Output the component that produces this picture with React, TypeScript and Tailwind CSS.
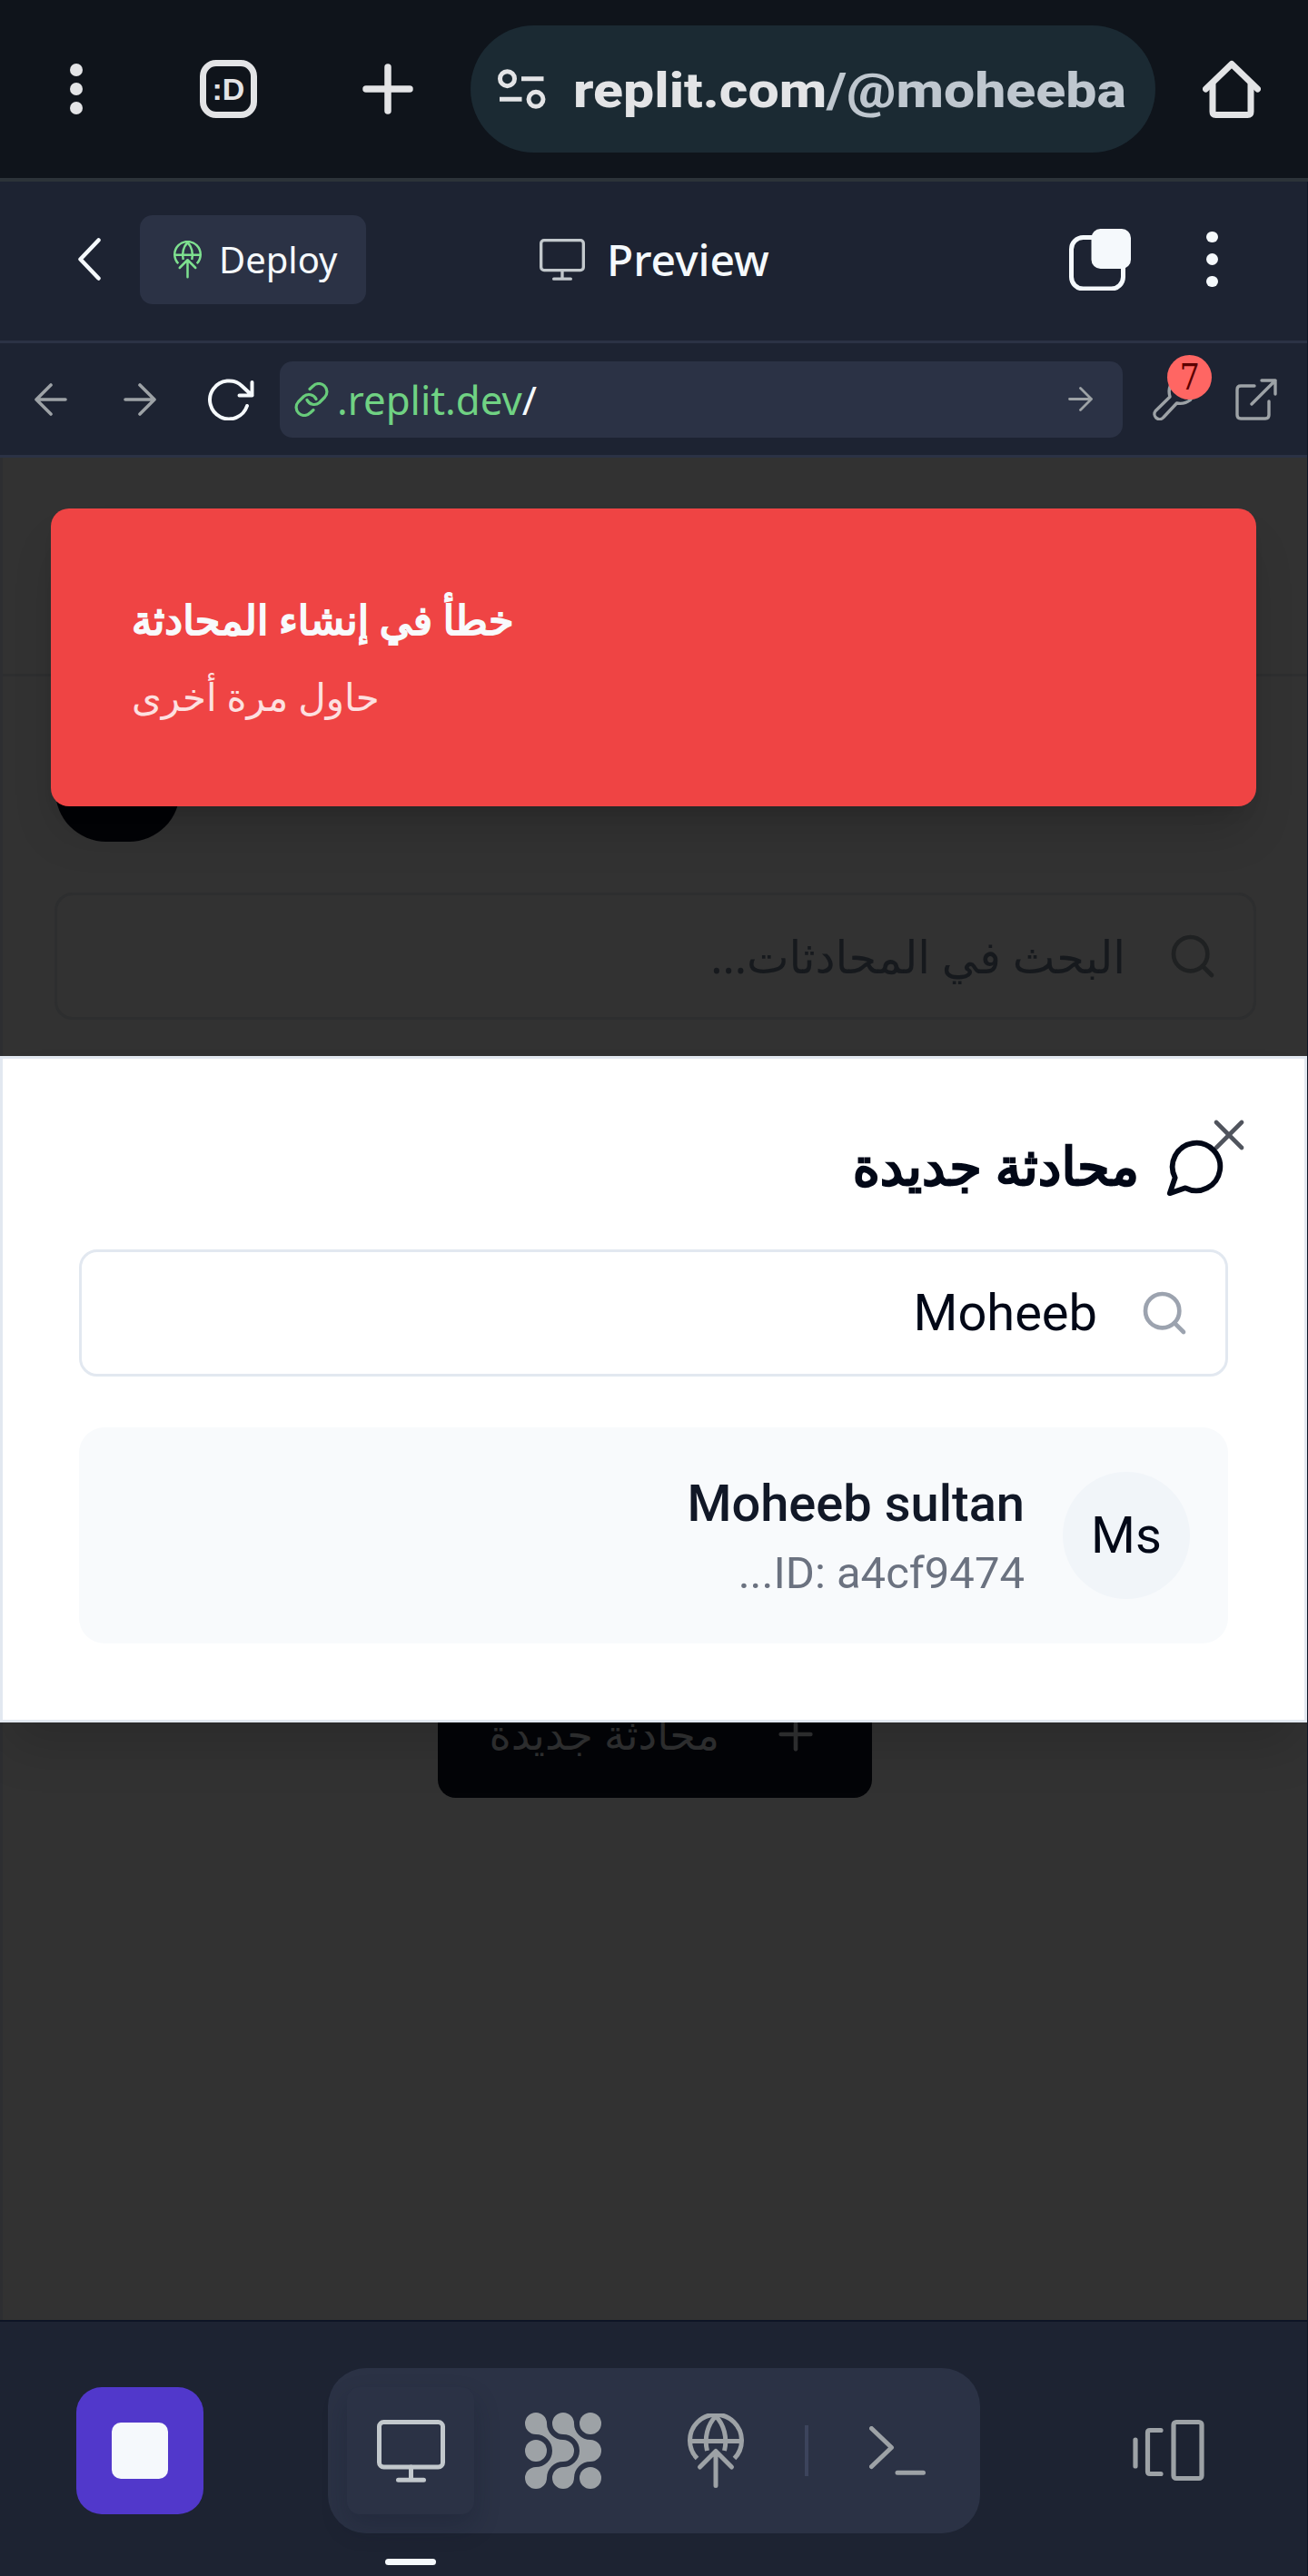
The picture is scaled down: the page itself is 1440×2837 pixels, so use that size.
import React from "react";
import { Plus, Search, X } from "lucide-react";

type IconProps = { className?: string };

const stroke = {
  fill: "none",
  stroke: "currentColor",
  strokeLinecap: "round" as const,
  strokeLinejoin: "round" as const,
};

const MonitorIcon = ({ className }: IconProps) => (
  <svg viewBox="0 0 75 69" className={className} {...stroke} strokeWidth={5}>
    <rect x="2.5" y="2.5" width="70" height="49.5" rx="5" />
    <path d="M37.5 52v14M23.5 66.2h28" />
  </svg>
);

const DeployIcon = ({ className }: IconProps) => (
  <svg viewBox="0 0 62 82" className={className} {...stroke} strokeWidth={5}>
    <path d="M10.500 49.500A28.500 28.500 0 1 1 51.500 49.500M3 30.500h56" strokeLinecap="butt" />
    <path d="M31 3C22 12 18 27 21.500 41M31 3C40 12 44 27 40.500 41" strokeLinecap="butt" />
    <path d="M31 79.500V41.500M13.500 59L31 41.500L48.500 59" />
  </svg>
);

const AgentIcon = ({ className }: IconProps) => {
  const link =
    "M24 12A18 18 0 0 0 42 30A12 12 0 0 1 42 54A18 18 0 0 0 24 72A12 12 0 1 1 12 60A18 18 0 0 0 30 42A18 18 0 0 0 12 24A12 12 0 1 1 24 12Z";
  return (
    <svg viewBox="0 0 84 84" className={className} fill="currentColor">
      <path d={link} />
      <path d={link} transform="translate(30 0)" />
      <circle cx="12" cy="42" r="12" />
      <circle cx="72" cy="12" r="12" />
      <circle cx="72" cy="72" r="12" />
    </svg>
  );
};

const Dots = ({ className }: IconProps) => (
  <div className={className}>
    <i className="block aspect-square w-full rounded-full bg-current" />
    <i className="block aspect-square w-full rounded-full bg-current" />
    <i className="block aspect-square w-full rounded-full bg-current" />
  </div>
);

function BrowserBar() {
  return (
    <header className="flex h-[200px] shrink-0 items-center border-b-4 border-[#2c3339] bg-[#0f141b] text-[#e3e4e6]">
      <Dots className="ml-[77px] flex w-3.5 flex-col gap-[7px]" />
      <div className="ml-[129px] flex h-16 w-[63px] items-center justify-center rounded-[18px] border-[7.500px] border-[#e3e4e6]">
        <span className="font-['Liberation_Sans'] text-[34px] leading-none font-bold">:D</span>
      </div>
      <svg viewBox="0 0 56 56" className="ml-[116px] h-14 w-14" {...stroke} strokeWidth={7.5}>
        <path d="M28 4v48M4 28h48" />
      </svg>
      <div className="ml-[63px] flex h-[140px] w-[754px] items-center rounded-full bg-[#1b2a33]">
        <svg viewBox="0 0 53 44" className="ml-[30px] h-11 w-[53px] shrink-0" fill="none" stroke="currentColor" strokeWidth={5}>
          <circle cx="10.500" cy="10.700" r="8" />
          <circle cx="42" cy="33.300" r="8" />
          <path d="M26 10.700h24.500M2 33.300h24.500" />
        </svg>
        <span className="mt-[3px] ml-[30px] origin-left scale-x-[1.125] font-[Roboto] text-[54px] leading-[70px] font-extrabold whitespace-nowrap">
          replit.com<span className="text-[#bfc7cf]">/@moheeba</span>
        </span>
      </div>
      <svg viewBox="0 0 64 64" className="ml-auto mr-[52px] h-16 w-16" {...stroke} strokeWidth={7}>
        <path d="M3.500 32L32 4.500L60.500 32" />
        <path d="M11 27v30q0 3.500 3.500 3.500h35q3.500 0 3.500-3.500V27" />
      </svg>
    </header>
  );
}

function WorkspaceHeader() {
  return (
    <div className="flex h-[178px] shrink-0 items-center border-b-[3px] border-[#2b3245] pb-1 text-[#f5f9fc]">
      <svg viewBox="0 0 25 47" className="ml-[86px] h-[47px] w-[25px]" {...stroke} strokeWidth={4.5}>
        <path d="M22.500 2.500L2.500 23.500L22.500 44.500" />
      </svg>
      <div className="ml-[43px] flex h-[98px] w-[249px] items-center rounded-[14px] bg-[#2b3245]">
        <DeployIcon className="ml-[37px] h-[42px] w-[31px] text-[#7ee08f]" />
        <span className="ml-[19px] font-['Noto_Sans'] text-[40px] leading-[56px]">Deploy</span>
      </div>
      <MonitorIcon className="ml-[191px] h-[46px] w-[50px] text-[#c2c8cc]" />
      <span className="ml-[24px] w-[180px] font-['Noto_Sans'] text-[48px] leading-[60px] font-medium whitespace-nowrap">Preview</span>
      <svg viewBox="0 0 68 68" className="ml-[329px] h-[68px] w-[68px]">
        <rect x="2.500" y="9.500" width="57" height="56.500" rx="13" fill="none" stroke="currentColor" strokeWidth="5" />
        <rect x="24.500" y="0" width="43.500" height="44" rx="10" fill="currentColor" />
      </svg>
      <Dots className="ml-[83px] flex w-[12.500px] flex-col gap-3" />
    </div>
  );
}

function AddressRow() {
  return (
    <div className="flex h-[126px] shrink-0 items-center border-b-[3px] border-[#2b3245] text-[#9da2a6]">
      <svg viewBox="0 0 36 36" className="ml-[38px] h-9 w-9" {...stroke} strokeWidth={3.6}>
        <path d="M34 18H2M18 2L2 18L18 34" />
      </svg>
      <svg viewBox="0 0 36 36" className="ml-[62px] h-9 w-9" {...stroke} strokeWidth={3.6}>
        <path d="M2 18h32M18 2l16 16l-16 16" />
      </svg>
      <svg viewBox="0 0 51 46" className="ml-[57px] h-[46px] w-[51px] text-[#f5f9fc]" {...stroke} strokeWidth={4}>
        <path d="M43 30A21 21 0 1 1 37.500 8.200L48.500 18.500M48.500 4v14.500H34.500" />
      </svg>
      <div className="ml-[28px] flex h-[84px] w-[928px] items-center rounded-[14px] bg-[#2b3245]">
        <svg viewBox="0 0 38 38" className="ml-[16px] h-[38px] w-[38px] text-[#68cb7b]" {...stroke} strokeWidth={3.2}>
          <path d="M17 7.500L20.500 4.300A8.800 8.800 0 0 1 33.500 16.500L27.500 22.500A8.800 8.800 0 0 1 14 19.500" />
          <path d="M21 30.500L17.500 33.700A8.800 8.800 0 0 1 4.500 21.500L10.500 15.500A8.800 8.800 0 0 1 24 18.500" />
        </svg>
        <span className="ml-[9px] font-['Noto_Sans'] text-[43.800px] leading-[60px] text-[#70d283]">
          .replit.dev<span className="text-[#f5f9fc]">/</span>
        </span>
        <svg viewBox="0 0 27 27" className="mr-[33px] ml-auto h-[27px] w-[27px]" {...stroke} strokeWidth={2.8}>
          <path d="M1.500 13.500h24M13.500 1.500l12 12l-12 12" />
        </svg>
      </div>
      <div className="relative ml-[33px] h-[46px] w-[46px]">
        <svg viewBox="0 0 46 46" className="h-full w-full" {...stroke} strokeWidth={3.4}>
          <path d="M3.200 35.500L19 20Q16.500 11 21 5.500Q27 1 34 2.500L29 9l1 7l7 1l6.500-5Q46 18 41.500 23.500Q35 28.500 26.500 27L12 42.500A5.500 5.500 0 0 1 3.200 35.500Z" />
        </svg>
        <span className="absolute -top-[26px] left-[16px] flex h-[49px] w-[49px] items-center justify-center rounded-full bg-[#ff6663] font-['DejaVu_Serif'] text-[40px] leading-none text-[#5c0000]">
          <span className="scale-x-[0.88]">7</span>
        </span>
      </div>
      <svg viewBox="0 0 46 46" className="ml-[45px] h-[46px] w-[46px]" {...stroke} strokeWidth={3.4}>
        <path d="M21 8H6q-4 0-4 4v28q0 4 4 4h27q4 0 4-4V25M29 2h15v15M44 2L18 28" />
      </svg>
    </div>
  );
}

function Toast() {
  return (
    <div
      dir="rtl"
      className="absolute top-[56px] left-[56px] flex h-[328px] w-[1327px] flex-col items-end rounded-[20px] bg-[#ef4444] pt-[79px] pl-[89px] shadow-[0_35px_52px_-10px_rgba(0,0,0,0.15),0_14px_21px_-14px_rgba(0,0,0,0.15)]"
    >
      <div className="text-[44.600px] leading-[85px] text-[#f8fafc] [-webkit-text-stroke:2px_#f8fafc]">خطأ في إنشاء المحادثة</div>
      <div className="text-[42px] leading-[85px] text-[#fde0e0]">حاول مرة أخرى</div>
    </div>
  );
}

function NewChatDialog() {
  return (
    <section
      dir="rtl"
      className="absolute top-[659px] left-0 flex h-[734px] w-full flex-col border-[3px] border-[#e2e8f0] bg-white pr-[84px] pl-[84px] text-[#020817] shadow-[0_35px_52px_-10px_rgba(0,0,0,0.15)]"
    >
      <X className="absolute top-[56px] right-[55px] h-14 w-14 text-[#50545d]" strokeWidth={2} />
      <div className="mt-[84px] flex h-[70px] items-center gap-[28px]">
        <svg viewBox="0 0 24 24" className="relative h-[70px] w-[70px] shrink-0" {...stroke} strokeWidth={2}>
          <path d="M7.900 20A9 9 0 1 0 4 16.100L2 22Z" />
        </svg>
        <h2 className="-mt-1 text-[57.600px] leading-[70px] whitespace-nowrap [-webkit-text-stroke:2.500px_#020817]">محادثة جديدة</h2>
      </div>
      <div className="mt-[56px] flex h-[140px] shrink-0 items-center rounded-[20px] border-[3px] border-[#e2e8f0] pr-[39px] font-[Roboto]">
        <Search className="h-14 w-14 text-[#9ca3af]" strokeWidth={2} />
        <span className="mr-[46px] text-[56px] leading-[84px]">Moheeb</span>
      </div>
      <div className="mt-[56px] flex h-[238px] shrink-0 items-center rounded-[28px] bg-[#f8fafc] pr-[42px] font-[Roboto]">
        <div className="flex h-[140px] w-[140px] items-center justify-center rounded-full bg-[#f1f5f9] text-[56px]">Ms</div>
        <div className="mr-[42px]">
          <div className="text-[56px] leading-[84px] font-medium text-[#111827]">Moheeb sultan</div>
          <div className="text-[49px] leading-[70px] text-[#6b7280]">ID: a4cf9474...</div>
        </div>
      </div>
    </section>
  );
}

function Preview() {
  return (
    <main className="relative h-[2051px] shrink-0 overflow-hidden font-['Noto_Sans','DejaVu_Sans',sans-serif]">
      <div className="flex h-full flex-col border-l-[3px] border-[#2d2e31] bg-[#323232]">
        <div className="h-[241px] shrink-0 border-b-[3px] border-[#2d2e2f]" />
        <div className="mt-[70px] ml-[58px] h-[112px] w-[137px] shrink-0 rounded-full bg-[#020306]" />
        <div
          dir="rtl"
          className="mt-[56px] mr-[56px] ml-[57px] flex h-[140px] shrink-0 items-center rounded-[20px] border-[3px] border-[#2d2e2f] pr-[39px]"
        >
          <Search className="h-14 w-14 text-[#1f2122]" strokeWidth={2} />
          <span className="mr-[46px] text-[49.500px] leading-[84px] whitespace-nowrap text-[#16191d]">البحث في المحادثات...</span>
        </div>
        <div
          dir="rtl"
          className="mt-[717px] ml-[479px] flex h-[140px] w-[478px] shrink-0 items-center rounded-[20px] bg-[#030407] pr-[56px] text-[#303132]"
        >
          <Plus className="h-14 w-14" strokeWidth={2} />
          <span className="mr-[56px] text-[46.300px] leading-[70px] whitespace-nowrap">محادثة جديدة</span>
        </div>
      </div>
      <NewChatDialog />
      <Toast />
    </main>
  );
}

function BottomDock() {
  return (
    <nav className="relative flex h-[282px] shrink-0 items-start border-t-2 border-[#0e1525] text-[#9da2a6]">
      <div className="mt-[72px] ml-[84px] flex h-[140px] w-[140px] items-center justify-center rounded-[28px] bg-[#5138cb]">
        <i className="block h-[62px] w-[62px] rounded-[10px] bg-[#f5f9fc]" />
      </div>
      <div className="mt-[51px] ml-[137px] flex h-[182px] w-[718px] items-center rounded-[42px] bg-[#2b3245]">
        <div className="ml-[21px] flex h-[140px] w-[140px] items-center justify-center rounded-[14px] bg-[#2b3245] shadow-[0_14px_28px_rgba(14,21,37,0.24)]">
          <MonitorIcon className="h-[69px] w-[75px] text-[#c2c8cc]" />
        </div>
        <AgentIcon className="ml-[56px] h-[84px] w-[84px]" />
        <DeployIcon className="ml-[95px] h-[82px] w-[62px]" />
        <i className="ml-[67px] block h-[56px] w-[3.500px] bg-[#3c445c]" />
        <svg viewBox="0 0 62 54" className="ml-[67px] h-[54px] w-[62px]" {...stroke} strokeWidth={5}>
          <path d="M2.500 2.500L24.500 23.500L2.500 44.500M31 51.300h28.500" />
        </svg>
      </div>
      <svg viewBox="0 0 79 69" className="mt-[107px] ml-[168px] h-[69px] w-[79px]" {...stroke} strokeWidth={5.2}>
        <path d="M3 23v29M31 12.500H19q-2.500 0-2.500 2.500v43q0 2.500 2.500 2.500h12" />
        <rect x="45" y="3.500" width="31" height="62" rx="3" />
      </svg>
      <i className="absolute top-[261px] left-[424px] block h-[7px] w-14 rounded-full bg-[#f5f9fc]" />
    </nav>
  );
}

export default function App() {
  return (
    <div className="flex h-[2837px] w-[1440px] flex-col overflow-hidden bg-[#0e1525]">
      <BrowserBar />
      <div className="flex w-[1439px] flex-col bg-[#1d2332]">
        <WorkspaceHeader />
        <AddressRow />
        <Preview />
        <BottomDock />
      </div>
    </div>
  );
}
